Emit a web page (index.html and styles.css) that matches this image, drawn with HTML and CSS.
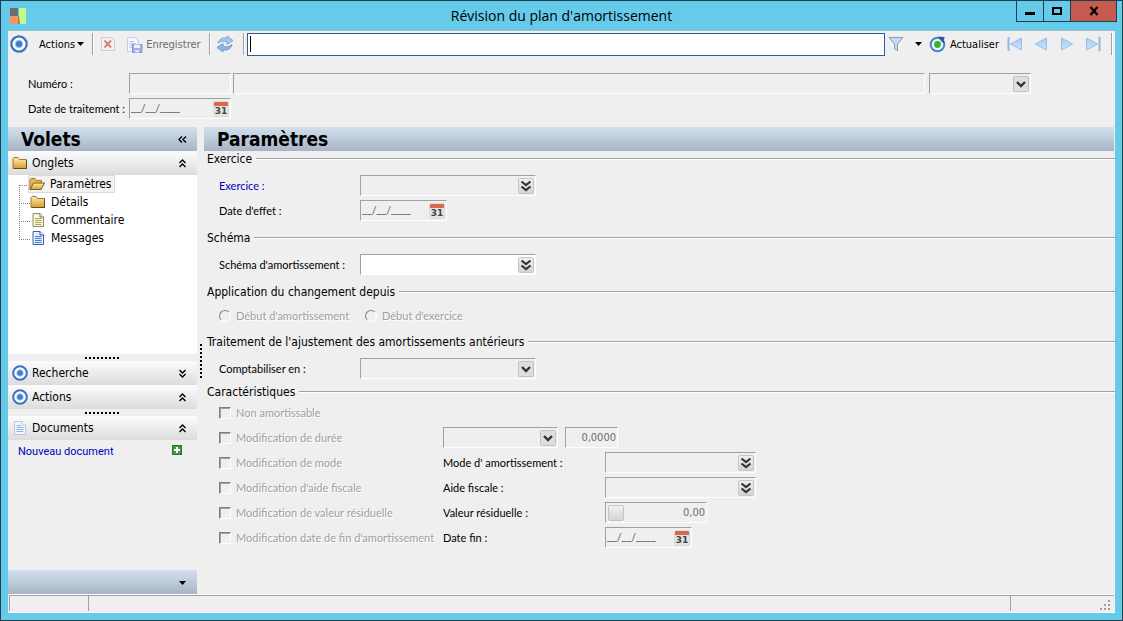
FILE: index.html
```html
<!DOCTYPE html>
<html lang="fr">
<head>
    <meta charset="UTF-8">
    <meta name="viewport" content="width=device-width, initial-scale=1.0">
    <title>Révision du plan d'amortissement</title>
    <link rel="stylesheet" href="styles.css">
</head>
<body>
    <svg class="sprite" aria-hidden="true">
        <linearGradient id="g-folder" x1="0" y1="0" x2="0" y2="1"><stop offset="0" stop-color="#fdeeb0"/><stop offset="1" stop-color="#d99b2b"/></linearGradient>
        <linearGradient id="g-nav" x1="0" y1="0" x2="0" y2="1"><stop offset="0" stop-color="#a4cdf6"/><stop offset="1" stop-color="#cbe3fb"/></linearGradient>
        <symbol id="target" viewBox="0 0 16 16">
            <circle cx="8" cy="8" r="6.800" fill="#fff" stroke="#3a72c4" stroke-width="2"/>
            <circle cx="8" cy="8" r="3.200" fill="#3f7bd0" stroke="#9cc0ee"/>
        </symbol>
        <symbol id="double-down" viewBox="0 0 14 14">
            <path d="M2.500 2.500L7 6L11.500 2.500M2.500 7.500L7 11L11.500 7.500" fill="none" stroke="#333" stroke-width="2.200"/>
        </symbol>
        <symbol id="chev-down" viewBox="0 0 9 9">
            <path d="M1.500 1L4.500 4L7.500 1M1.500 5L4.500 8L7.500 5" fill="none" stroke="#000" stroke-width="1.400"/>
        </symbol>
        <symbol id="chev-up" viewBox="0 0 9 9">
            <path d="M1.500 4L4.500 1L7.500 4M1.500 8L4.500 5L7.500 8" fill="none" stroke="#000" stroke-width="1.400"/>
        </symbol>
        <symbol id="chev-left" viewBox="0 0 9 9">
            <path d="M4 1.500L1 4.500L4 7.500M8 1.500L5 4.500L8 7.500" fill="none" stroke="#000" stroke-width="1.400"/>
        </symbol>
        <symbol id="folder" viewBox="0 0 16 16">
            <path d="M1 3.500L2 2.500H6L7.500 4.500H14.500V13.500H1Z" fill="url(#g-folder)" stroke="#a9742a"/>
            <path d="M14.500 5V13.500H2" fill="none" stroke="#5f4a25"/>
        </symbol>
        <symbol id="folder-open" viewBox="0 0 16 16">
            <path d="M1 13.500V3.500L2 2.500H6L7.500 4.500H12.500V7" fill="#e9b94f" stroke="#a9742a"/>
            <path d="M1 13.500L4.500 7H15.500L12 13.500Z" fill="url(#g-folder)" stroke="#7a5a24"/>
        </symbol>
        <symbol id="page-yellow" viewBox="0 0 16 16">
            <path d="M3 1.500H10L13.500 5V14.500H3Z" fill="#fffbd0" stroke="#8b8b6a"/>
            <path d="M10 1.500V5H13.500" fill="#fff" stroke="#6b6b50"/>
            <path d="M5 6.500H11.500M5 8.500H11.500M5 10.500H11.500M5 12.500H11.500" stroke="#a8a568"/>
        </symbol>
        <symbol id="page-blue" viewBox="0 0 16 16">
            <path d="M3 1.500H10L13.500 5V14.500H3Z" fill="#e3eeff" stroke="#41609c"/>
            <path d="M10 1.500V5H13.500" fill="#fff" stroke="#2f4c86"/>
            <path d="M5 6.500H11.500M5 8.500H11.500M5 10.500H11.500M5 12.500H11.500" stroke="#4a7bd6"/>
        </symbol>
        <symbol id="page-pale" viewBox="0 0 16 16">
            <path d="M2.500 1.500H10L13.500 5V14.500H2.500Z" fill="#f2f7ff" stroke="#b3c6e2"/>
            <path d="M10 1.500V5H13.500" fill="#fff" stroke="#b3c6e2"/>
            <path d="M4.500 5.500H9M4.500 7.500H11.500M4.500 9.500H11.500M4.500 11.500H11.500" stroke="#8fb1e0"/>
        </symbol>
    </svg>

    <header class="titlebar">
        <svg class="app-logo" viewBox="0 0 16 16" width="16" height="16">
            <rect width="8" height="8" fill="#6d6d6d"/>
            <rect y="8" width="8" height="8" fill="#f79460"/>
            <rect x="8" y="8" width="2" height="8" fill="#7b8a66"/>
            <path d="M9 0H16V16H10L9 8Z" fill="#c5f987"/>
        </svg>
        <h1>Révision du plan d'amortissement</h1>
        <div class="window-buttons">
            <button type="button" aria-label="Réduire"><svg width="12" height="10" viewBox="0 0 12 10"><path d="M1 7.500H11" stroke="#000" stroke-width="3"/></svg></button>
            <button type="button" aria-label="Agrandir"><svg width="12" height="10" viewBox="0 0 12 10"><path d="M2 2H10V8H2Z" fill="none" stroke="#000" stroke-width="2"/></svg></button>
            <button type="button" class="close" aria-label="Fermer"><svg width="12" height="10" viewBox="0 0 12 10"><path d="M2.500 1L9.500 9M9.500 1L2.500 9" stroke="#000" stroke-width="2.200"/></svg></button>
        </div>
    </header>

    <div class="client">
        <div class="toolbar">
            <svg width="18" height="18"><use href="#target"/></svg>
            <button type="button" class="tool tool-actions">Actions
                <svg width="7" height="4" viewBox="0 0 7 4"><path d="M0 0H7L3.500 4Z"/></svg>
            </button>
            <span class="sep"></span>
            <button type="button" class="tool tool-delete" aria-label="Supprimer" disabled>
                <svg width="16" height="16" viewBox="0 0 16 16"><path d="M1.500 1.500H11L14.500 4.500V14.500H1.500Z" fill="#f2f2f4" stroke="#c9cdd6"/><path d="M4.500 4.500L11 11.500M11 4.500L4.500 11.500" stroke="#d98080" stroke-width="2"/></svg>
            </button>
            <button type="button" class="tool tool-save" disabled>
                <svg width="17" height="17" viewBox="0 0 17 17"><path d="M1.500 1.500H9L12.500 5V15.500H1.500Z" fill="#f3f7ff" stroke="#c3cfe4"/><path d="M3.500 5.500H8M3.500 7.500H10M3.500 9.500H8M3.500 11.500H7" stroke="#b4c6e8"/><path d="M6.500 8.500H16V16.500H6.500Z" fill="#a3ade8" stroke="#8a95cf"/><rect x="8" y="8.500" width="6" height="3.500" fill="#edf0ff"/><rect x="9" y="14" width="4" height="2.500" fill="#dfe3f8"/></svg>
                Enregistrer
            </button>
            <span class="sep"></span>
            <button type="button" class="tool tool-sync" aria-label="Synchroniser">
                <svg width="18" height="18" viewBox="0 0 18 18"><path d="M2 8C3 4 7 2 11 3.500V1L17 5.500L11 9.500V7C8 5.500 5 6 2 8Z" fill="#a6c6ea" stroke="#7ea6d6"/><path d="M16 9.500C15 14 11 16 7 14.500V17L1 12.500L7 8.500V11C10 12.500 13 12 16 9.500Z" fill="#92b7e3" stroke="#6f99cf"/></svg>
            </button>
            <span class="sep"></span>
            <input type="text" class="search" aria-label="Recherche rapide">
            <button type="button" class="tool tool-filter" aria-label="Filtrer">
                <svg width="16" height="16" viewBox="0 0 16 16"><path d="M1 1.500H15L9.500 8V14.500L6.500 13V8Z" fill="#c4dbf0" stroke="#7d9fc2"/></svg>
            </button>
            <button type="button" class="tool tool-filter-menu" aria-label="Options du filtre">
                <svg width="7" height="4" viewBox="0 0 7 4"><path d="M0 0H7L3.500 4Z"/></svg>
            </button>
            <button type="button" class="tool tool-refresh">
                <svg width="17" height="17" viewBox="0 0 17 17"><circle cx="8.500" cy="8.500" r="6.800" fill="#eef5ff" stroke="#4a80cc" stroke-width="2"/><circle cx="8.500" cy="8.500" r="3.400" fill="#31b331"/><path d="M9 0.500L15.500 1L14.500 7.500L12 5Z" fill="#2d5ba5"/></svg>
                Actualiser
            </button>
            <button type="button" class="tool tool-nav" aria-label="Premier"><svg width="16" height="14" viewBox="0 0 16 14"><path d="M1.500 0V14" stroke="#8fb8dd" stroke-width="2"/><path d="M14.500 1V13L3.500 7Z" fill="url(#g-nav)" stroke="#93bde6"/></svg></button>
            <button type="button" class="tool tool-nav" aria-label="Précédent"><svg width="16" height="14" viewBox="0 0 16 14"><path d="M13.500 1V13L2.500 7Z" fill="url(#g-nav)" stroke="#93bde6"/></svg></button>
            <button type="button" class="tool tool-nav" aria-label="Suivant"><svg width="16" height="14" viewBox="0 0 16 14"><path d="M2.500 1V13L13.500 7Z" fill="url(#g-nav)" stroke="#93bde6"/></svg></button>
            <button type="button" class="tool tool-nav" aria-label="Dernier"><svg width="16" height="14" viewBox="0 0 16 14"><path d="M14.500 0V14" stroke="#8fb8dd" stroke-width="2"/><path d="M1.500 1V13L12.500 7Z" fill="url(#g-nav)" stroke="#93bde6"/></svg></button>
            <span class="sep"></span>
        </div>

        <form class="entete">
            <div class="row">
                <label for="numero">Numéro :</label>
                <input type="text" id="numero" class="field w-code" disabled>
                <input type="text" class="field libelle" aria-label="Libellé" disabled>
                <select class="field w-code" aria-label="Statut" disabled></select>
            </div>
            <div class="row">
                <label for="date-traitement">Date de traitement :</label>
                <div class="field w-code">
                    <input type="text" id="date-traitement" value="__/__/____" disabled>
                    <button type="button" class="pick calendrier" aria-label="Calendrier">31</button>
                </div>
            </div>
        </form>

        <div class="panes">
            <aside class="sidebar">
                <div class="bar">
                    <h2>Volets</h2>
                    <button type="button" class="fold" aria-label="Masquer"><svg><use href="#chev-left"/></svg></button>
                </div>
                <div class="volet">
                    <svg class="ico"><use href="#folder"/></svg><h3>Onglets</h3>
                    <button type="button" class="fold" aria-label="Replier"><svg><use href="#chev-up"/></svg></button>
                </div>
                <ul class="tree">
                    <li><a href="#" class="active"><svg class="ico"><use href="#folder-open"/></svg>Paramètres</a></li>
                    <li><a href="#"><svg class="ico"><use href="#folder"/></svg>Détails</a></li>
                    <li><a href="#"><svg class="ico"><use href="#page-yellow"/></svg>Commentaire</a></li>
                    <li><a href="#"><svg class="ico"><use href="#page-blue"/></svg>Messages</a></li>
                </ul>
                <div class="splitter"></div>
                <div class="volet">
                    <svg class="ico"><use href="#target"/></svg><h3>Recherche</h3>
                    <button type="button" class="fold" aria-label="Déplier"><svg><use href="#chev-down"/></svg></button>
                </div>
                <div class="volet">
                    <svg class="ico"><use href="#target"/></svg><h3>Actions</h3>
                    <button type="button" class="fold" aria-label="Replier"><svg><use href="#chev-up"/></svg></button>
                </div>
                <div class="splitter"></div>
                <div class="volet">
                    <svg class="ico"><use href="#page-pale"/></svg><h3>Documents</h3>
                    <button type="button" class="fold" aria-label="Replier"><svg><use href="#chev-up"/></svg></button>
                </div>
                <div class="documents">
                    <a href="#">Nouveau document</a>
                    <button type="button" aria-label="Ajouter"><svg width="10" height="10" viewBox="0 0 10 10"><rect x="0.500" y="0.500" width="9" height="9" fill="#3f9c3f" stroke="#2c762c"/><path d="M5 2V8M2 5H8" stroke="#fff" stroke-width="2"/></svg></button>
                </div>
                <div class="bar bar-bottom">
                    <button type="button" class="fold" aria-label="Plus de volets"><svg viewBox="0 0 9 9"><path d="M1 3H8L4.500 7Z"/></svg></button>
                </div>
            </aside>
            <div class="grip"></div>

            <main class="content">
                <div class="bar"><h2>Paramètres</h2></div>

                <fieldset class="groupe">
                    <legend>Exercice</legend>
                    <div class="row">
                        <label for="exercice" class="lien">Exercice :</label>
                        <div class="field w-choix">
                            <input type="text" id="exercice" disabled>
                            <button type="button" class="pick" aria-label="Choisir"><svg><use href="#double-down"/></svg></button>
                        </div>
                    </div>
                    <div class="row">
                        <label for="date-effet">Date d'effet :</label>
                        <div class="field w-date">
                            <input type="text" id="date-effet" value="__/__/____" disabled>
                            <button type="button" class="pick calendrier" aria-label="Calendrier">31</button>
                        </div>
                    </div>
                </fieldset>

                <fieldset class="groupe">
                    <legend>Schéma</legend>
                    <div class="row">
                        <label for="schema">Schéma d'amortissement :</label>
                        <div class="field w-choix actif">
                            <input type="text" id="schema">
                            <button type="button" class="pick" aria-label="Choisir"><svg><use href="#double-down"/></svg></button>
                        </div>
                    </div>
                </fieldset>

                <fieldset class="groupe compact">
                    <legend>Application du changement depuis</legend>
                    <div class="row">
                        <label class="option radio"><input type="radio" name="depuis" disabled>Début d'amortissement</label>
                        <label class="option radio"><input type="radio" name="depuis" disabled>Début d'exercice</label>
                    </div>
                </fieldset>

                <fieldset class="groupe">
                    <legend>Traitement de l'ajustement des amortissements antérieurs</legend>
                    <div class="row">
                        <label for="comptabiliser">Comptabiliser en :</label>
                        <select id="comptabiliser" class="field w-choix" disabled></select>
                    </div>
                </fieldset>

                <fieldset class="groupe serre">
                    <legend>Caractéristiques</legend>
                    <div class="row">
                        <label class="option"><input type="checkbox" disabled>Non amortissable</label>
                    </div>
                    <div class="row">
                        <label class="option"><input type="checkbox" disabled>Modification de durée</label>
                        <select class="field w-duree" aria-label="Unité de durée" disabled></select>
                        <input type="text" class="field w-taux" value="0,0000" aria-label="Durée" disabled>
                    </div>
                    <div class="row">
                        <label class="option"><input type="checkbox" disabled>Modification de mode</label>
                        <label for="mode" class="detail">Mode d' amortissement :</label>
                        <div class="field w-mode">
                            <input type="text" id="mode" disabled>
                            <button type="button" class="pick" aria-label="Choisir"><svg><use href="#double-down"/></svg></button>
                        </div>
                    </div>
                    <div class="row">
                        <label class="option"><input type="checkbox" disabled>Modification d'aide fiscale</label>
                        <label for="aide" class="detail">Aide fiscale :</label>
                        <div class="field w-mode">
                            <input type="text" id="aide" disabled>
                            <button type="button" class="pick" aria-label="Choisir"><svg><use href="#double-down"/></svg></button>
                        </div>
                    </div>
                    <div class="row">
                        <label class="option"><input type="checkbox" disabled>Modification de valeur résiduelle</label>
                        <label for="valeur" class="detail">Valeur résiduelle :</label>
                        <div class="field w-code montant">
                            <button type="button" class="pick vide" aria-label="Devise" disabled></button>
                            <input type="text" id="valeur" value="0,00" disabled>
                        </div>
                    </div>
                    <div class="row">
                        <label class="option"><input type="checkbox" disabled>Modification date de fin d'amortissement</label>
                        <label for="date-fin" class="detail">Date fin :</label>
                        <div class="field w-date">
                            <input type="text" id="date-fin" value="__/__/____" disabled>
                            <button type="button" class="pick calendrier" aria-label="Calendrier">31</button>
                        </div>
                    </div>
                </fieldset>
            </main>
        </div>

        <footer class="statusbar">
            <span class="cell cell-first"></span>
            <span class="cell cell-main"></span>
            <span class="cell cell-last">
                <svg width="11" height="11" viewBox="0 0 11 11" fill="#a0a0a0"><path d="M9 0h2v2H9zM5 4h2v2H5zM9 4h2v2H9zM1 8h2v2H1zM5 8h2v2H5zM9 8h2v2H9z"/></svg>
            </span>
        </footer>
    </div>
</body>
</html>
```
FILE: styles.css
```css
* {
    box-sizing: border-box;
}

body {
    margin: 0;
    min-height: 100vh;
    display: flex;
    flex-direction: column;
    padding: 0 7px 7px;
    border: 1px solid #1d3f4e;
    background-color: #66cbea;
    font-family: Lato, Arial, sans-serif;
    font-size: 11px;
    color: #000;
}

h1,
h2,
h3,
ul {
    margin: 0;
    padding: 0;
    font-weight: normal;
}

svg {
    display: block;
    flex: none;
}

button {
    padding: 0;
    border: 0;
    background: none;
    font: inherit;
    color: inherit;
}

a {
    color: inherit;
    text-decoration: none;
}

.sprite {
    position: absolute;
    width: 0;
    height: 0;
}

.ico {
    width: 16px;
    height: 16px;
}

/* Title bar */
.titlebar {
    display: grid;
    grid-template-columns: 1fr auto 1fr;
    align-items: center;
    height: 29px;
}

.app-logo {
    margin-left: 2px;
}

.titlebar h1 {
    font-family: "Open Sans", "Segoe UI", sans-serif;
    font-size: 14px;
    line-height: 20px;
}

.window-buttons {
    display: flex;
    align-self: start;
    justify-self: end;
    margin-right: -2px;
    border: 1px solid #1d3f4e;
    border-top: 0;
}

.window-buttons button {
    display: flex;
    align-items: center;
    justify-content: center;
    width: 27px;
    height: 20px;
    border-right: 1px solid #1d3f4e;
}

.window-buttons .close {
    width: 45px;
    border-right: 0;
    background-color: #c45a50;
}

.client {
    flex: 1;
    display: flex;
    flex-direction: column;
    background-color: #efefef;
    border-top: 1px solid #a8bcc4;
}

/* Toolbar */
.toolbar {
    display: flex;
    align-items: center;
    height: 26px;
    padding: 0 2px;
    font-family: "DejaVu Sans Condensed", Tahoma, sans-serif;
    font-size: 11px;
}

.tool {
    display: flex;
    align-items: center;
    gap: 3px;
}

.tool:disabled {
    color: #6d6d6d;
}

.tool-actions {
    gap: 2px;
    margin: 0 8px 0 11px;
}

.tool-delete {
    margin: 0 10px 0 6px;
}

.tool-save {
    margin-right: 8px;
}

.tool-sync {
    margin: 0 9px 0 5px;
}

.tool-filter {
    margin-left: 3px;
}

.tool-filter-menu {
    margin: 0 7px 0 11px;
}

.tool-refresh {
    gap: 4px;
    margin-right: 8px;
}

.tool-nav {
    margin-right: 10px;
}

.sep {
    width: 2px;
    height: 22px;
    border-left: 1px solid #a0a0a0;
    border-right: 1px solid #fff;
}

.search {
    flex: 1;
    min-width: 0;
    height: 23px;
    margin-left: 2px;
    padding: 0 2px;
    border: 1px solid #2c5d94;
    background: #fff linear-gradient(#000, #000) 2px center / 1px 16px no-repeat;
}

.search:focus {
    outline: 0;
    background: #fff;
}

/* Fields */
.row {
    display: flex;
    align-items: center;
    height: 25px;
}

.field {
    display: flex;
    align-items: center;
    height: 21px;
    margin: 0;
    padding: 0 1px;
    border: 1px solid;
    border-color: #a0a0a0 #fff #fff #a0a0a0;
    border-radius: 0;
    background-color: #efefef;
    font: 11px Roboto, Arial, sans-serif;
    color: #6d6d6d;
}

.field input {
    flex: 1;
    width: 0;
    min-width: 0;
    padding: 0;
    border: 0;
    outline: 0;
    background: none;
    font: inherit;
    color: #6d6d6d;
}

select.field {
    appearance: none;
    opacity: 1;
    background-image: url("data:image/svg+xml,%3Csvg xmlns='http://www.w3.org/2000/svg' width='16' height='16'%3E%3Crect x='.5' y='.5' width='15' height='15' rx='1' fill='%23dedede' stroke='%23c2c2c2'/%3E%3Cpath d='M4 6L8 10L12 6' fill='none' stroke='%23333' stroke-width='2.4'/%3E%3C/svg%3E");
    background-repeat: no-repeat;
    background-position: right 1px center;
}

.field.actif {
    background-color: #fff;
}

.pick {
    width: 16px;
    height: 16px;
    border: 1px solid #c6c6c6;
    border-radius: 2px;
    background: linear-gradient(#f0f0f0, #d4d4d4);
}

.pick svg {
    width: 14px;
    height: 14px;
}

.calendrier {
    padding-top: 4px;
    border-color: #dcdcdc;
    background: linear-gradient(#d9694b 0 4px, #e4e4e4 4px);
    font: bold 9px/10px "DejaVu Sans", Verdana, sans-serif;
    color: #444;
}

.vide {
    margin-left: 1px;
}

.w-code {
    width: 102px;
}

.w-choix {
    width: 176px;
}

.w-date {
    width: 87px;
}

.w-duree {
    width: 115px;
}

.w-taux {
    width: 53px;
    margin-left: 7px;
    text-align: right;
}

.w-mode {
    width: 151px;
}

.w-taux,
.montant {
    font-family: "DejaVu Sans Condensed", Tahoma, sans-serif;
}

.montant input {
    text-align: right;
}

/* Header form */
.entete {
    padding: 14px 84px 6px 20px;
}

.entete label {
    width: 101px;
}

.entete .libelle {
    flex: 1;
    min-width: 0;
    margin: 0 4px 0 2px;
}

/* Panes */
.panes {
    flex: 1;
    display: flex;
}

.bar {
    display: flex;
    align-items: center;
    height: 24px;
    padding-left: 13px;
    background: linear-gradient(#d2e0ee, #a6b4c4);
}

.bar h2 {
    flex: 1;
    font-family: "DejaVu Sans Condensed", Tahoma, sans-serif;
    font-size: 19px;
    font-weight: bold;
    line-height: 24px;
}

.sidebar {
    display: flex;
    flex-direction: column;
    width: 189px;
    font-family: "DejaVu Sans Condensed", Tahoma, sans-serif;
    font-size: 12px;
}

.volet {
    display: flex;
    align-items: center;
    gap: 4px;
    height: 24px;
    padding-left: 4px;
    background: linear-gradient(#fcfcfc, #dcdcdc);
}

.volet h3 {
    flex: 1;
    font-size: 12px;
}

.fold {
    margin-right: 10px;
}

.fold svg {
    width: 9px;
    height: 9px;
}

.tree {
    flex: 1;
    padding-left: 11px;
    background-color: #fff;
    list-style: none;
}

.tree li {
    display: flex;
    align-items: center;
    height: 18px;
}

.tree li::before {
    content: "";
    align-self: flex-start;
    width: 10px;
    height: 18px;
    margin-top: -8px;
    border-bottom: 1px dotted #808080;
}

.tree li + li::before {
    border-left: 1px dotted #808080;
}

.tree a {
    display: flex;
    align-items: center;
    gap: 5px;
    height: 16px;
    padding-right: 3px;
}

.tree .active {
    background-color: #f2f2f2;
    outline: 1px solid #dadada;
}

.splitter {
    height: 7px;
    background: repeating-linear-gradient(90deg, #000 0 2px, transparent 2px 4px) center / 36px 2px no-repeat;
}

.documents {
    display: flex;
    align-items: flex-start;
    justify-content: space-between;
    height: 130px;
    padding: 5px 15px 0 10px;
    font-family: Roboto, Arial, sans-serif;
    font-size: 11px;
    color: #0000c0;
}

.bar-bottom {
    justify-content: flex-end;
}

.grip {
    align-self: center;
    width: 2px;
    height: 34px;
    margin: 0 2px 0 3px;
    background: repeating-linear-gradient(#000 0 2px, transparent 2px 4px);
}

/* Content */
.content {
    flex: 1;
    min-width: 0;
}

.content .bar {
    margin-right: 1px;
}

.groupe {
    min-width: 0;
    margin: 0;
    padding: 6px 0 7px 15px;
    border: 0;
}

.compact {
    padding: 3px 0 6px 15px;
}

.serre {
    padding-top: 0;
    margin-top: -4px;
}

.groupe legend {
    display: flex;
    align-items: center;
    gap: 4px;
    width: calc(100% + 12px);
    height: 16px;
    margin-left: -12px;
    padding: 0;
    font-family: "DejaVu Sans Condensed", Tahoma, sans-serif;
    font-size: 12px;
    line-height: 16px;
}

.groupe legend::after {
    content: "";
    flex: 1;
    border-top: 1px solid #a0a0a0;
    border-bottom: 1px solid #fff;
}

.groupe label {
    width: 141px;
}

.groupe .lien {
    color: #0000c0;
}

.groupe .option {
    display: flex;
    align-items: center;
    gap: 5px;
    width: 224px;
    color: #a0a0a0;
    text-shadow: 1px 1px #fff;
}

.groupe .radio {
    width: 146px;
}

.groupe .detail {
    width: 162px;
}

.option input {
    appearance: none;
    width: 12px;
    height: 12px;
    margin: 0;
    border: 1px solid;
    border-color: #808080 #fff #fff #808080;
    box-shadow: inset 1px 1px #a0a0a0;
}

.radio input {
    border-radius: 50%;
    box-shadow: none;
}

/* Status bar */
.statusbar {
    display: flex;
    height: 19px;
    padding: 0 1px 1px;
    border-top: 1px solid #fff;
    border-bottom: 1px solid #fff;
}

.cell {
    border-top: 1px solid #a0a0a0;
    border-left: 1px solid #a0a0a0;
}

.cell-first {
    width: 79px;
}

.cell-main {
    flex: 1;
}

.cell-last {
    display: flex;
    align-items: flex-end;
    justify-content: flex-end;
    width: 104px;
    padding-right: 4px;
}
```
